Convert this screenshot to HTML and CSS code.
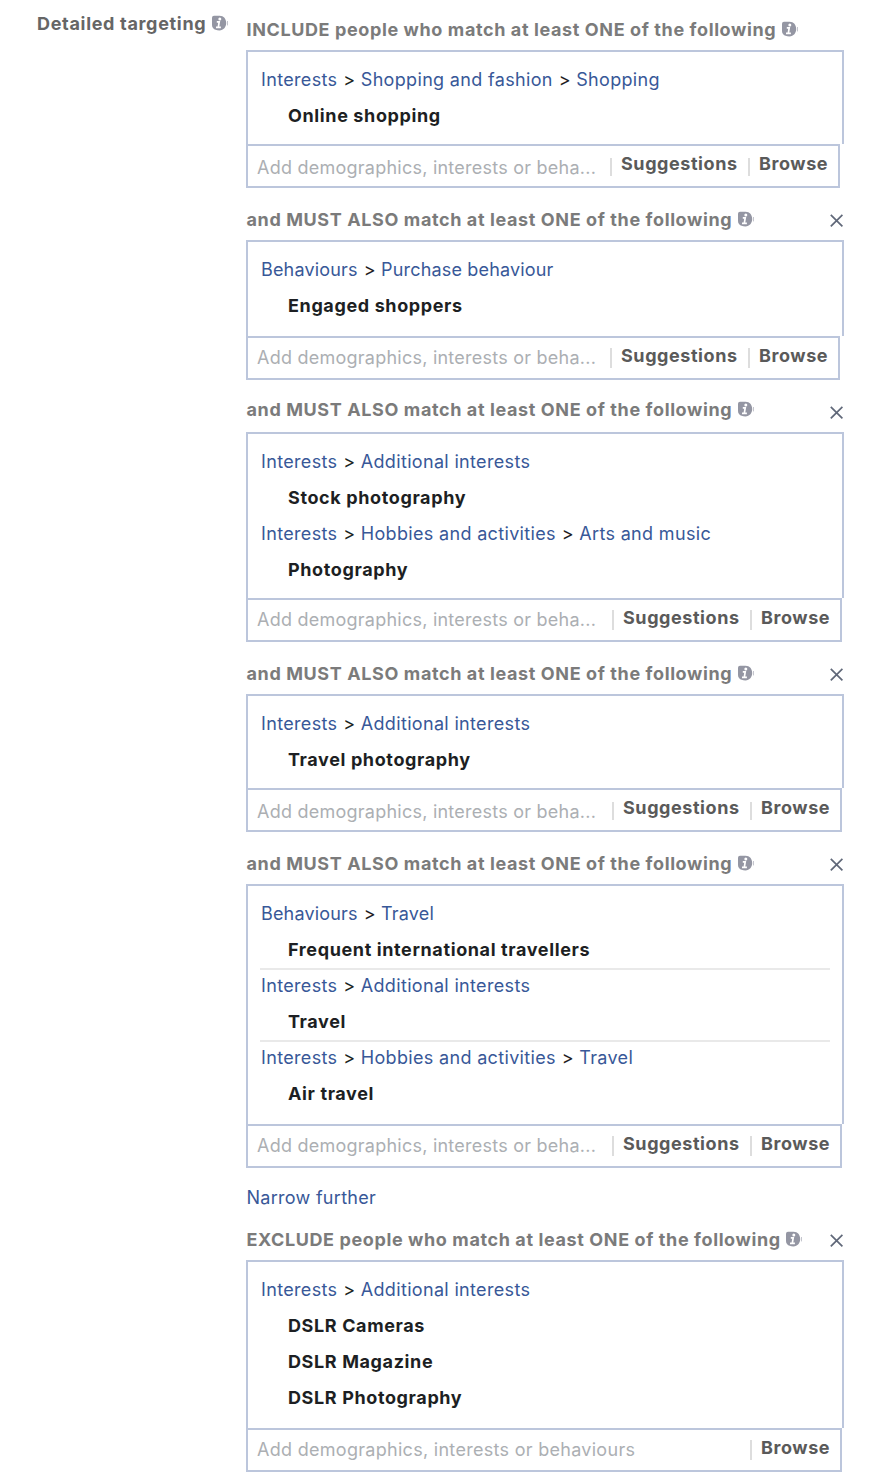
FILE: index.html
```
<!DOCTYPE html>
<html lang="en">
<head>
<meta charset="utf-8">
<title>Detailed targeting</title>
<link rel="stylesheet" href="styles.css">
</head>
<body>
<svg class="defs" aria-hidden="true">
  <symbol id="info" viewBox="0 0 16 16">
    <path d="M2 .8H7.5C11.8 .8 14.2 4 14.2 8S11.6 15.4 7.4 15.4C4.6 15.4 2.4 14.8 1 13Q0 11.8 0 10V2.8Q0 .8 2 .8Z" fill="#9496a3"/>
    <path d="M15.5 6V10.4" stroke="#c4c5cd" fill="none"/>
    <path d="M4.8 6.8H7.2L6.3 12.3H8.9M4 12.3H6.3" stroke="#fff" stroke-width="1.7" fill="none"/>
    <circle cx="7.8" cy="4" r="1.5" fill="#fff"/>
  </symbol>
  <symbol id="close" viewBox="0 0 14 14">
    <path d="M.8 .8L12.4 12.4M12.4 .8L.8 12.4" stroke="#606879" stroke-width="1.7" fill="none"/>
  </symbol>
</svg>
<main class="targeting">
  <div class="label"><span>Detailed targeting</span><svg class="info"><use href="#info"/></svg></div>
  <div class="groups">
    <section class="group">
      <header class="head head-first"><h2 class="include">INCLUDE people who match at least ONE of the following</h2><svg class="info"><use href="#info"/></svg></header>
      <div class="box">
        <p class="path"><a>Interests</a><i>&gt;</i><a>Shopping and fashion</a><i>&gt;</i><a>Shopping</a></p>
        <p class="item">Online shopping</p>
      </div>
      <div class="entry short low"><span class="hint">Add demographics, interests or beha...</span><b class="suggest">Suggestions</b><b class="browse">Browse</b></div>
    </section>
    <section class="group">
      <header class="head"><h2>and MUST ALSO match at least ONE of the following</h2><svg class="info"><use href="#info"/></svg><svg class="close"><use href="#close"/></svg></header>
      <div class="box roomy">
        <p class="path tight"><a>Behaviours</a><i>&gt;</i><a>Purchase behaviour</a></p>
        <p class="item">Engaged shoppers</p>
      </div>
      <div class="entry short"><span class="hint">Add demographics, interests or beha...</span><b class="suggest">Suggestions</b><b class="browse">Browse</b></div>
    </section>
    <section class="group">
      <header class="head raised"><h2>and MUST ALSO match at least ONE of the following</h2><svg class="info"><use href="#info"/></svg><svg class="close"><use href="#close"/></svg></header>
      <div class="box">
        <p class="path"><a>Interests</a><i>&gt;</i><a>Additional interests</a></p>
        <p class="item">Stock photography</p>
        <p class="path"><a>Interests</a><i>&gt;</i><a>Hobbies and activities</a><i>&gt;</i><a>Arts and music</a></p>
        <p class="item">Photography</p>
      </div>
      <div class="entry"><span class="hint">Add demographics, interests or beha...</span><b class="suggest">Suggestions</b><b class="browse">Browse</b></div>
    </section>
    <section class="group">
      <header class="head"><h2>and MUST ALSO match at least ONE of the following</h2><svg class="info"><use href="#info"/></svg><svg class="close"><use href="#close"/></svg></header>
      <div class="box">
        <p class="path"><a>Interests</a><i>&gt;</i><a>Additional interests</a></p>
        <p class="item">Travel photography</p>
      </div>
      <div class="entry low"><span class="hint">Add demographics, interests or beha...</span><b class="suggest">Suggestions</b><b class="browse">Browse</b></div>
    </section>
    <section class="group">
      <header class="head"><h2>and MUST ALSO match at least ONE of the following</h2><svg class="info"><use href="#info"/></svg><svg class="close"><use href="#close"/></svg></header>
      <div class="box roomy">
        <p class="path tight"><a>Behaviours</a><i>&gt;</i><a>Travel</a></p>
        <p class="item">Frequent international travellers</p>
        <p class="path ruled"><a>Interests</a><i>&gt;</i><a>Additional interests</a></p>
        <p class="item">Travel</p>
        <p class="path ruled"><a>Interests</a><i>&gt;</i><a>Hobbies and activities</a><i>&gt;</i><a>Travel</a></p>
        <p class="item">Air travel</p>
      </div>
      <div class="entry"><span class="hint">Add demographics, interests or beha...</span><b class="suggest">Suggestions</b><b class="browse">Browse</b></div>
    </section>
    <a class="narrow">Narrow further</a>
    <section class="group">
      <header class="head head-exclude"><h2 class="exclude">EXCLUDE people who match at least ONE of the following</h2><svg class="info"><use href="#info"/></svg><svg class="close"><use href="#close"/></svg></header>
      <div class="box roomy">
        <p class="path"><a>Interests</a><i>&gt;</i><a>Additional interests</a></p>
        <p class="item">DSLR Cameras</p>
        <p class="item">DSLR Magazine</p>
        <p class="item">DSLR Photography</p>
      </div>
      <div class="entry"><span class="hint full">Add demographics, interests or behaviours</span><b class="browse">Browse</b></div>
    </section>
  </div>
</main>
</body>
</html>
```
FILE: styles.css
```
* { box-sizing: border-box; margin: 0; }
body { background: #fff; font: 18px/36px Inter, Roboto, sans-serif; color: #1d1f23; }
.defs { position: absolute; width: 0; height: 0; }
.targeting { display: flex; height: 1482px; overflow: hidden; white-space: nowrap; }
.label { display: flex; align-items: flex-start; width: 246px; padding: 6px 0 0 37px; font-weight: 650; letter-spacing: .68px; color: #666; }
.label span { width: 175px; }
.info { flex: none; width: 16px; height: 16px; margin-top: 9px; }
.groups { width: 598px; }
.head { display: flex; height: 52px; padding: 14px 0 0 .5px; color: #7b7b7b; }
.head-first { height: 50px; padding-top: 12px; }
.head-exclude { height: 50px; padding-top: 12px; }
.head h2 { width: 491px; font-size: 18px; font-weight: 650; line-height: 36px; letter-spacing: .61px; }
.head .include { width: 535px; }
.head .exclude { width: 539px; }
.raised { padding-top: 12px; }
.close { width: 14px; height: 14px; margin: 12px 0 0 auto; }
.raised .close { margin-top: 14px; }
.box { border: 2px solid #bcc6dc; border-bottom: 0; padding: 10px 12px; }
.roomy { padding-bottom: 12px; }
.path { display: flex; height: 36px; padding-left: 1px; letter-spacing: .33px; }
.path i { font-style: normal; letter-spacing: 0; margin: 0 5.5px 0 6px; }
.tight { letter-spacing: .17px; }
.ruled { box-shadow: inset 0 2px #e9e9e9; }
.path a, .narrow { color: #385898; }
.item { height: 36px; padding-left: 28px; font-weight: 650; letter-spacing: .62px; }
.entry { display: flex; width: 596px; height: 44px; border: 2px solid #bcc6dc; padding-left: 9px; color: #5a5a5a; }
.short { width: 594px; }
.hint { padding-top: 2px; letter-spacing: .24px; color: #acafb3; }
.full { letter-spacing: .29px; }
.low .hint { padding-top: 4px; }
.entry b { position: relative; font-weight: 650; letter-spacing: .57px; }
.entry b::before { content: ""; position: absolute; left: -11px; top: 10px; width: 2px; height: 20px; background: #ddd; }
.low b::before { top: 12px; height: 18px; }
.suggest { width: 138px; margin-left: auto; }
.browse { width: 79px; }
.suggest + .browse { margin-left: 0; }
.hint + .browse { margin-left: auto; }
.narrow { display: block; height: 42px; padding: 12px 0 0 .5px; letter-spacing: .28px; }
```
